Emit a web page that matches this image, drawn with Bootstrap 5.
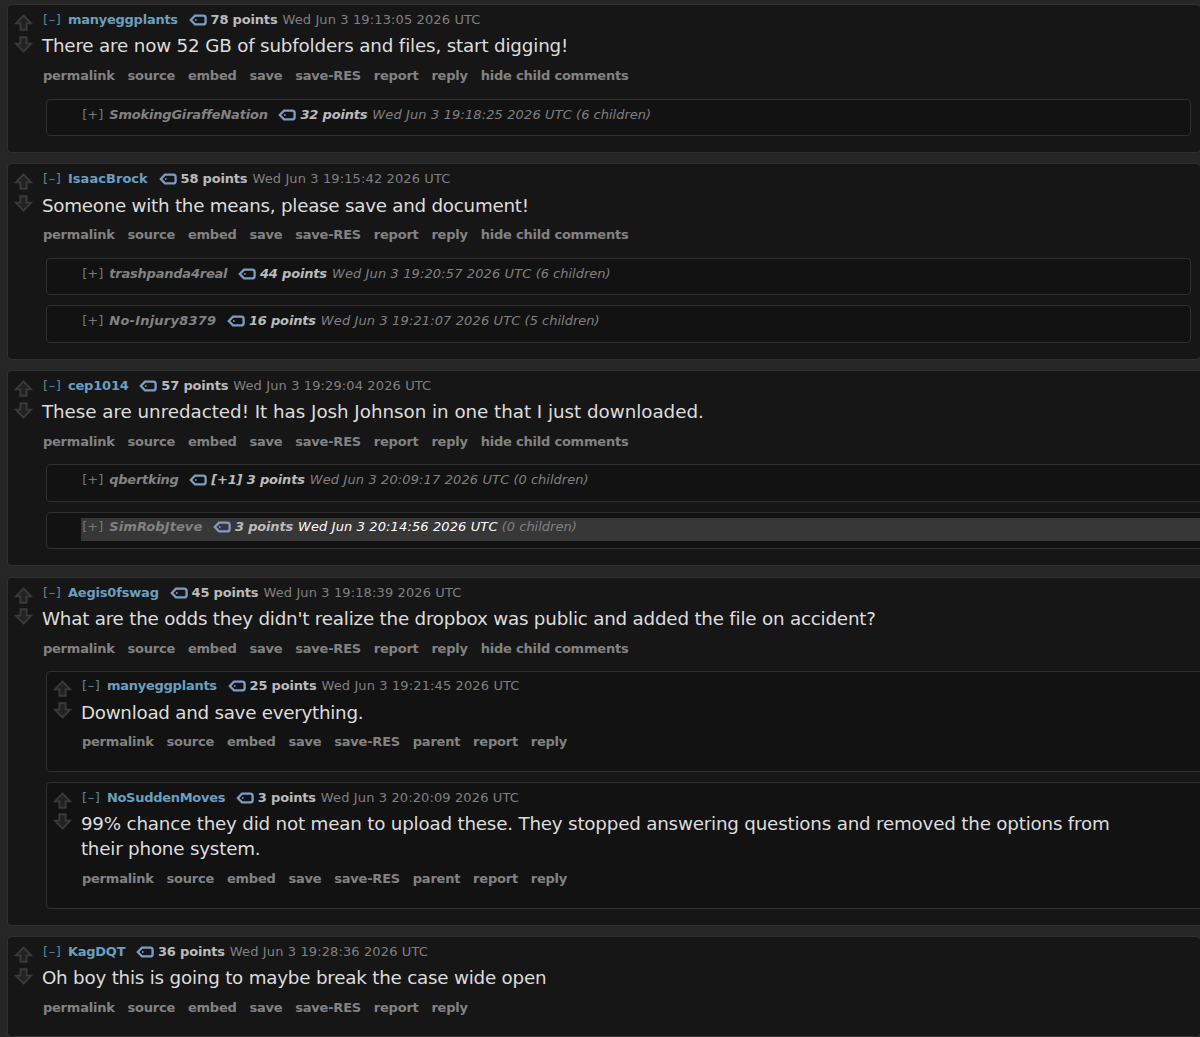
<!DOCTYPE html>
<html lang="en">
<head>
  <meta charset="UTF-8" />
  <meta name="viewport" content="width=device-width, initial-scale=1.0" />
  <title>Comments</title>
  <link rel="stylesheet" href="https://cdn.jsdelivr.net/npm/bootstrap@5.3.0/dist/css/bootstrap.min.css" />
  <style>
    body {
      background: #262626;
      color: #ddd;
      font-family: Verdana, "DejaVu Sans", sans-serif;
      font-size: 13px;
      overflow: hidden;
    }
    .thread-list { padding: 4.2px 0 0 7.3px; margin-right: -1px; gap: 10.3px; }
    .comment {
      background: #161616;
      border: 1px solid #303030;
      border-radius: 4px;
      padding-top: 6.1px;
    }
    .comment .comment { background: #121212; padding-top: 5.4px; }
    .comment.wide { margin-right: -20px; }
    .votes { width: 33.6px; padding: 3px 0 0 6px; gap: 4.5px; }
    .votes svg { width: 19px; height: 17px; fill: #222; stroke: #3b3b3b; stroke-width: 1.9; }
    .tagline { height: 18px; line-height: 18px; white-space: pre; }
    .toggle { width: 26px; padding-left: 1px; color: #5a86a0; letter-spacing: 0.7px; }
    .author { color: #6a9fc0; font-size: 13px; font-weight: bold; margin-right: 10.7px; }
    .tag { width: 18px; height: 12px; margin-right: 4px; fill: none; stroke: #7d9cc4; stroke-width: 2.3; }
    .points { color: #bbb; font-size: 13px; font-weight: bold; letter-spacing: -0.18px; margin-right: 5px; }
    .when, .count { color: #808080; letter-spacing: 0.12px; }
    .count { letter-spacing: 0; }
    .message { font-size: 18.3px; line-height: 25.7px; margin-top: 4.2px; max-width: 1050px; }
    .actions { height: 20px; line-height: 20px; margin: 7px 0 18.5px 1px; gap: 12.8px; color: #828282; font-size: 13px; font-weight: bold; letter-spacing: -0.21px; }
    .replies { margin: -6px 9.5px 16px 38px; gap: 10.3px; }
    .wide .replies { margin-right: 0; }
    .comment .folded { height: 37.3px; padding: 5px 0 0 34px; font-style: italic; }
    .folded .tagline { margin-top: 1px; }
    .folded .toggle { width: 28px; font-style: normal; color: #777; letter-spacing: 0; }
    .folded .author { color: #828282; }
    .picked .tagline { background: #373737; height: 23px; padding-bottom: 5px; margin-top: 0; }
    .picked .when { color: #fff; }
  </style>
</head>
<body>
  <main id="threads" class="thread-list d-flex flex-column"></main>

  <script src="https://cdn.jsdelivr.net/npm/bootstrap@5.3.0/dist/js/bootstrap.bundle.min.js"></script>
  <script>
    // nameTrack / track: letter spacing in px for the author and the message
    const threads = [
      { author: 'manyeggplants', nameTrack: -0.25, points: '78 points', time: '19:13:05', track: -0.17, text: 'There are now 52 GB of subfolders and files, start digging!', replies: [
        { author: 'SmokingGiraffeNation', nameTrack: -0.2, points: '32 points', time: '19:18:25', children: 6 }
      ] },
      { author: 'IsaacBrock', nameTrack: 0.05, points: '58 points', time: '19:15:42', track: -0.25, text: 'Someone with the means, please save and document!', replies: [
        { author: 'trashpanda4real', nameTrack: -0.22, points: '44 points', time: '19:20:57', children: 6 },
        { author: 'No-Injury8379', nameTrack: 0.22, points: '16 points', time: '19:21:07', children: 5 }
      ] },
      { author: 'cep1014', points: '57 points', time: '19:29:04', wide: true, track: -0.03, text: 'These are unredacted! It has Josh Johnson in one that I just downloaded.', replies: [
        { author: 'qbertking', nameTrack: -0.27, points: '[+1] 3 points', time: '20:09:17', children: 0 },
        { author: 'SimRobJteve', nameTrack: 0.08, points: '3 points', time: '20:14:56', children: 0, picked: true }
      ] },
      { author: 'Aegis0fswag', points: '45 points', time: '19:18:39', wide: true, track: -0.21, text: 'What are the odds they didn\'t realize the dropbox was public and added the file on accident?', replies: [
        { author: 'manyeggplants', nameTrack: -0.25, points: '25 points', time: '19:21:45', track: -0.26, text: 'Download and save everything.' },
        { author: 'NoSuddenMoves', nameTrack: -0.29, points: '3 points', time: '20:20:09', track: -0.2, text: '99% chance they did not mean to upload these. They stopped answering questions and removed the options from their phone system.' }
      ] },
      { author: 'KagDQT', nameTrack: -0.25, points: '36 points', time: '19:28:36', track: -0.21, text: 'Oh boy this is going to maybe break the case wide open' }
    ];

    const arrowUp = '<svg viewBox="0 0 19 17"><path d="M9.5 1.5L17.2 9.4H12.6V15.8H6.4V9.4H1.8Z"/></svg>';
    const arrowDown = '<svg viewBox="0 0 19 17"><path d="M9.5 15.5L17.2 7.6H12.6V1.2H6.4V7.6H1.8Z"/></svg>';
    const tagIcon = '<svg class="tag" viewBox="0 0 18 12"><path d="M6 1.6H14Q16.6 1.6 16.6 3.8V8.2Q16.6 10.4 14 10.4H6L1.8 6Z"/><circle cx="6.8" cy="6" r="0.9" fill="#7d9cc4" stroke="none"/></svg>';

    function tagline(c, sign) {
      const count = c.children === undefined ? '' : `<span class="count"> (${c.children} children)</span>`;
      const track = c.nameTrack === undefined ? -0.18 : c.nameTrack;
      return `<div class="tagline d-flex align-items-center"><span class="toggle">[${sign}]</span><span class="author" style="letter-spacing:${track}px">${c.author}</span>${tagIcon}<span class="points">${c.points}</span><span class="when">Wed Jun 3 ${c.time} 2026 UTC</span>${count}</div>`;
    }

    function render(c, nested) {
      if (c.children !== undefined) {
        return `<article class="comment folded${c.picked ? ' picked' : ''}">${tagline(c, '+')}</article>`;
      }
      const actions = ['permalink', 'source', 'embed', 'save', 'save-RES'];
      if (nested) actions.push('parent');
      actions.push('report', 'reply');
      if (c.replies) actions.push('hide child comments');
      const replies = c.replies
        ? `<div class="replies d-flex flex-column">${c.replies.map(r => render(r, true)).join('')}</div>`
        : '';
      return `<article class="comment${c.wide ? ' wide' : ''}">
        <div class="d-flex">
          <div class="votes d-flex flex-column flex-shrink-0">${arrowUp}${arrowDown}</div>
          <div class="flex-grow-1">
            ${tagline(c, '–')}
            <div class="message" style="letter-spacing:${c.track || 0}px">${c.text}</div>
            <div class="actions d-flex">${actions.map(a => `<span>${a}</span>`).join('')}</div>
          </div>
        </div>
        ${replies}
      </article>`;
    }

    document.getElementById('threads').innerHTML = threads.map(t => render(t, false)).join('');
  </script>
</body>
</html>
